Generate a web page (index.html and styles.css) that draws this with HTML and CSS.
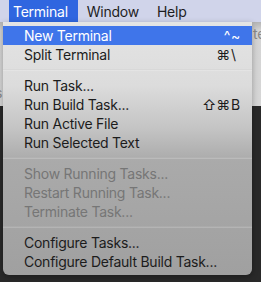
FILE: index.html
```html
<!DOCTYPE html>
<html lang="en">
<head>
  <meta charset="UTF-8" />
  <title>Terminal menu</title>
  <link rel="stylesheet" href="styles.css">
</head>
<body>
  <div class="menubar">
    <span class="menubar-item active">Terminal</span>
    <span class="menubar-item">Window</span>
    <span class="menubar-item">Help</span>
  </div>

  <div class="desktop">
    <div class="editor">
      <div class="editor-line right">te</div>
      <div class="editor-line left">s</div>
    </div>
    <div class="panel"></div>

    <div class="menu">
      <div class="menu-item selected">
        <span class="label">New Terminal</span>
        <span class="mods">^</span><span class="key">~</span>
      </div>
      <div class="menu-item">
        <span class="label">Split Terminal</span>
        <span class="mods">⌘</span><span class="key">\</span>
      </div>
      <div class="separator"></div>
      <div class="menu-item"><span class="label">Run Task...</span></div>
      <div class="menu-item">
        <span class="label">Run Build Task...</span>
        <span class="mods">⇧⌘</span><span class="key">B</span>
      </div>
      <div class="menu-item"><span class="label">Run Active File</span></div>
      <div class="menu-item"><span class="label">Run Selected Text</span></div>
      <div class="separator"></div>
      <div class="menu-item disabled"><span class="label">Show Running Tasks...</span></div>
      <div class="menu-item disabled"><span class="label">Restart Running Task...</span></div>
      <div class="menu-item disabled"><span class="label">Terminate Task...</span></div>
      <div class="separator"></div>
      <div class="menu-item"><span class="label">Configure Tasks...</span></div>
      <div class="menu-item"><span class="label">Configure Default Build Task...</span></div>
    </div>
  </div>
</body>
</html>
```

FILE: styles.css
```css
body {
  margin: 0;
  width: 261px;
  height: 282px;
  overflow: hidden;
  font-family: Inter, 'Noto Sans', sans-serif;
  font-size: 14px;
  letter-spacing: -0.25px;
  background-color: #2a2a2a;
  color: #1c1c1c;
}

.menubar {
  display: flex;
  height: 22px;
  padding-left: 9px;
  background-color: #d0d4ea;
  align-items: stretch;
}

.menubar-item {
  display: flex;
  align-items: center;
  padding: 0 9px 0 9px;
  color: #1e1e1e;
}

.menubar-item.active {
  background-color: #2f66e0;
  color: #fff;
  padding: 0 10px 0 4px;
}

.desktop {
  position: relative;
  height: 260px;
}

.editor {
  height: 84px;
  background: linear-gradient(#b4b4b4, #d4d4d4 10%, #d6d6d6);
  color: #8a8a8a;
}

.editor-line {
  height: 19px;
  line-height: 19px;
}

.editor-line.right {
  padding-top: 2px;
  padding-left: 253px;
}

.editor-line.left {
  margin-top: 40px;
  margin-left: -5px;
}

.panel {
  height: 176px;
  background-color: #292929;
}

.menu {
  position: absolute;
  top: 0;
  left: 3px;
  width: 249px;
  padding: 4px 0 4px;
  background: linear-gradient(#e4e4e4, #dcdcdc 25%, #c4c4c4 42%, #aaaaaa 55%, #a0a0a0 100%);
  border-radius: 0 0 6px 6px;
  box-shadow: 0 2px 6px rgba(0, 0, 0, 0.3);
}

.menu-item {
  display: flex;
  height: 19px;
  align-items: center;
  padding-left: 21px;
  padding-right: 8px;
}

.menu-item .label {
  flex: 1;
}

.menu-item .mods {
  text-align: right;
}

.menu-item .key {
  width: 13px;
  padding-left: 1px;
}

.menu-item.selected {
  background-color: #3f75ea;
  color: #fff;
}

.menu-item.disabled {
  color: #767676;
}

.separator {
  height: 1px;
  margin: 5px 0;
  background-color: rgba(255, 255, 255, 0.18);
  border-top: 1px solid rgba(0, 0, 0, 0.05);
}
```
